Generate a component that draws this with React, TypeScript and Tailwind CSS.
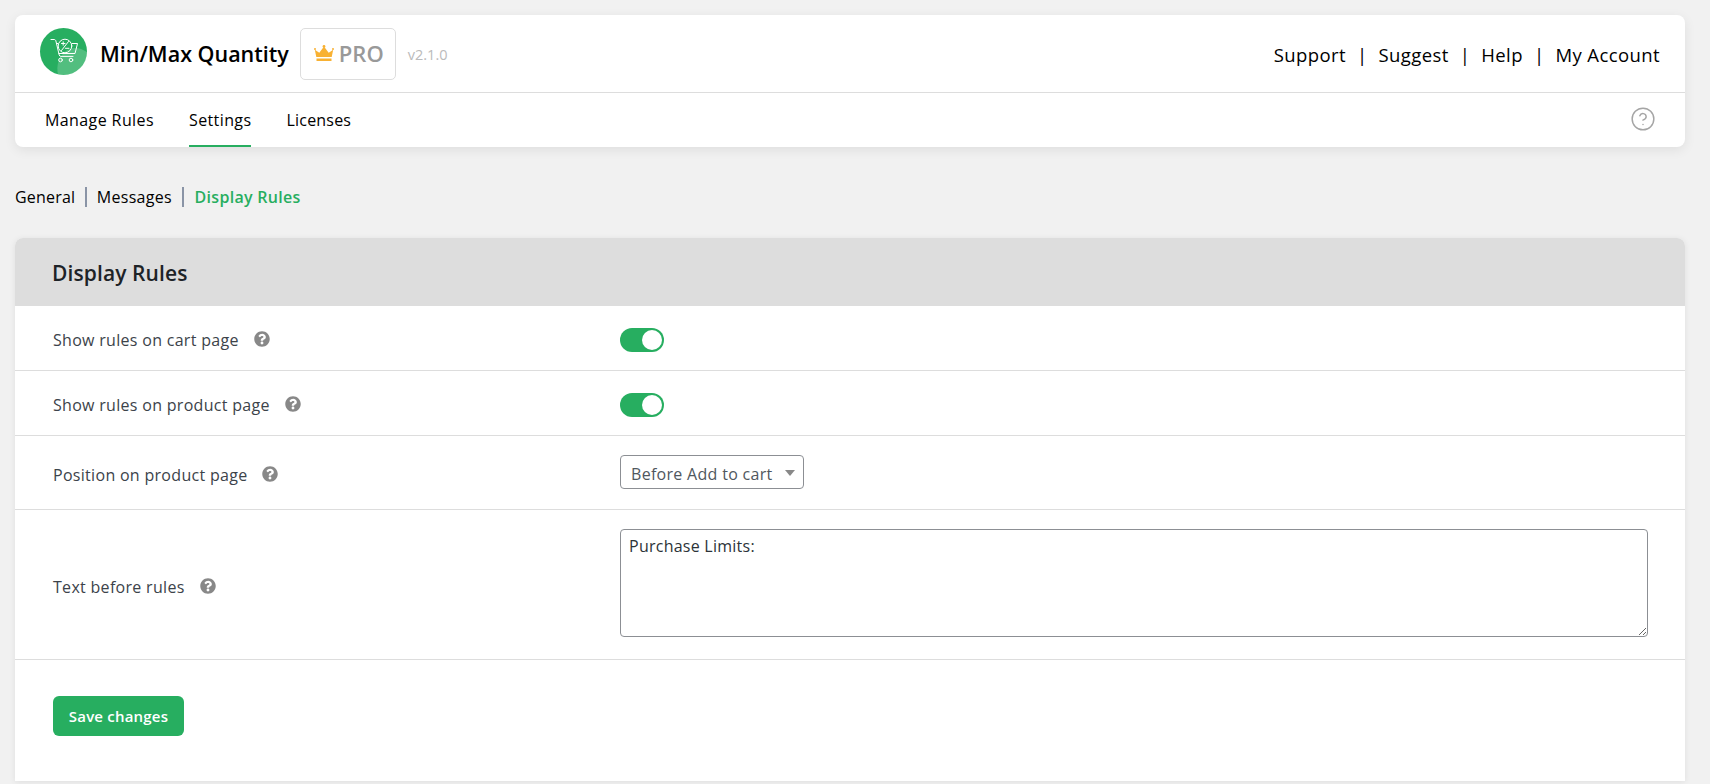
import React from 'react';
import { CircleHelp } from 'lucide-react';
import { FaQuestionCircle } from 'react-icons/fa';

const font = "font-['Open_Sans','Noto_Sans',sans-serif]";

const LogoIcon = () => (
  <div className="relative mb-[4px] h-[47px] w-[47px] shrink-0 overflow-hidden rounded-full bg-[#27ae60]">
    <svg viewBox="0 0 47 47" className="h-full w-full" fill="none">
      <path d="M47 24c-9-6-21-7-28 8-2 5-2 10-1 15h6c13 0 23-10 23-23z" fill="#fff" opacity="0.2" />
      <g stroke="#fff" strokeWidth="1" strokeLinecap="round" strokeLinejoin="round">
        <path d="M11 11.500h3c1 0 1.600.5 1.900 1.500l3.300 14c.2.9.9 1.400 1.800 1.400h12" />
        <path d="M16.500 15.500h1.500M32 15.500h5.500l-2.500 10H19" />
        <circle cx="20.500" cy="32" r="1.800" />
        <circle cx="31" cy="32" r="1.800" />
        <circle cx="25" cy="18" r="6.800" />
        <path d="M21.500 22.500l7-9" />
        <path d="M21.500 15.500h3.500M23.200 13.800v3.400M25.500 20.300h3.500" />
      </g>
    </svg>
  </div>
);

const Crown = () => (
  <svg viewBox="0 0 20 17" className="h-[17px] w-[20px]" fill="#f8b133">
    <path d="M2.300 12L0.800 4.800l4.500 3L10 1.500l4.700 6.300 4.500-3L17.700 12z" />
    <circle cx="10" cy="1.400" r="1.400" />
    <circle cx="1" cy="4" r="1" />
    <circle cx="19" cy="4" r="1" />
    <rect x="2.500" y="13.500" width="15" height="2.500" />
  </svg>
);

const Toggle = () => (
  <div className="mt-[4px] flex h-[24px] w-[44px] items-center justify-end rounded-full bg-[#27ae60] pr-[2px]">
    <div className="h-[20px] w-[20px] rounded-full bg-white" />
  </div>
);

const Row = ({ label, children, className }: { label: string; children: React.ReactNode; className: string }) => (
  <div className={`flex items-center border-b border-[#ddd] pl-[38px] ${className}`}>
    <div className="mt-[4px] flex w-[567px] shrink-0 items-center text-[16px] tracking-[0.3px] text-[#3c434a]">
      <span>{label}</span>
      <FaQuestionCircle className="ml-[15px] -translate-y-[1px] text-[16px] text-[#888]" />
    </div>
    {children}
  </div>
);

export default function App() {
  return (
    <div className={`h-[784px] overflow-hidden bg-[#f1f1f1] pt-[15px] pr-[25px] pl-[15px] ${font}`}>
      {/* top card */}
      <div className="rounded-[8px] bg-white shadow-[0_3px_12px_rgba(0,0,0,0.08)]">
        <div className="flex h-[78px] items-center justify-between border-b border-[#ddd] pr-[25px] pl-[25px]">
          <div className="flex items-center">
            <LogoIcon />
            <span className="mt-[2px] ml-[13px] text-[21.5px] font-semibold text-black">Min/Max Quantity</span>
            <div className="ml-[11px] flex h-[52px] w-[96px] items-center justify-center gap-[5px] rounded-[5px] border border-[#ddd] pl-[2px]">
              <Crown />
              <span className="text-[22px] font-semibold text-[#999]">PRO</span>
            </div>
            <span className="mt-[2px] ml-[12px] text-[14.5px] text-[#bbb]">v2.1.0</span>
          </div>
          <div className="mt-[2px] flex items-center text-[18.5px] tracking-[0.4px] text-black">
            <span>Support</span>
            <span className="mx-[11px]">|</span>
            <span>Suggest</span>
            <span className="mx-[11px]">|</span>
            <span>Help</span>
            <span className="mx-[11px]">|</span>
            <span>My Account</span>
          </div>
        </div>
        <div className="flex h-[54px] items-stretch justify-between pr-[29px] pl-[30px]">
          <div className="flex gap-[35px] text-[16px] tracking-[0.4px] text-black">
            <div className="flex items-center">Manage Rules</div>
            <div className="flex items-center border-y-2 border-t-transparent border-b-[#27ae60]">Settings</div>
            <div className="flex items-center tracking-[0.2px]">Licenses</div>
          </div>
          <div className="mb-[2px] flex items-center">
            <CircleHelp size={26} strokeWidth={1.35} className="text-[#a5a5a5]" />
          </div>
        </div>
      </div>

      {/* sub links */}
      <div className="flex h-[91px] items-center pt-[8px] text-[16px] tracking-[0.3px] text-black">
        <span className="tracking-[0.2px]">General</span>
        <span className="mx-[10px] h-[20px] w-[1.5px] bg-[#8a94a6]" />
        <span>Messages</span>
        <span className="mr-[11px] ml-[10px] h-[20px] w-[1.5px] bg-[#8a94a6]" />
        <span className="font-semibold text-[#27ae60]">Display Rules</span>
      </div>

      {/* panel */}
      <div className="h-[543px] rounded-t-[8px] bg-white shadow-[0_1px_6px_rgba(0,0,0,0.08)]">
        <div className="flex h-[68px] items-center rounded-t-[8px] bg-[#ddd] pt-[3px] pl-[37px] text-[21px] font-semibold tracking-[0.1px] text-[#1d2327]">
          Display Rules
        </div>
        <Row label="Show rules on cart page" className="h-[65px]">
          <Toggle />
        </Row>
        <Row label="Show rules on product page" className="h-[65px]">
          <Toggle />
        </Row>
        <Row label="Position on product page" className="h-[74px]">
          <div className="relative mb-[1px]">
            <select className="block h-[34px] w-[184px] appearance-none rounded-[4px] border border-[#8c8f94] bg-white pt-[4px] pl-[10px] text-[16px] tracking-[0.3px] text-[#50575e]">
              <option>Before Add to cart</option>
            </select>
            <div className="pointer-events-none absolute top-[15px] right-[9px] h-0 w-0 border-x-[5px] border-t-[6px] border-x-transparent border-t-[#888]" />
          </div>
        </Row>
        <Row label="Text before rules" className="h-[150px]">
          <textarea
            readOnly
            value="Purchase Limits:"
            className="mb-[4px] h-[108px] w-[1028px] rounded-[4px] border border-[#8c8f94] bg-white px-[8px] py-[4px] text-[16px] tracking-[0.25px] text-[#2c3338]"
          />
        </Row>
        <div className="pt-[36px] pl-[38px]">
          <button className="h-[40px] w-[131px] rounded-[6px] bg-[#27ae60] pt-[1px] text-[15px] font-semibold tracking-[0.2px] text-white">
            Save changes
          </button>
        </div>
      </div>
    </div>
  );
}
